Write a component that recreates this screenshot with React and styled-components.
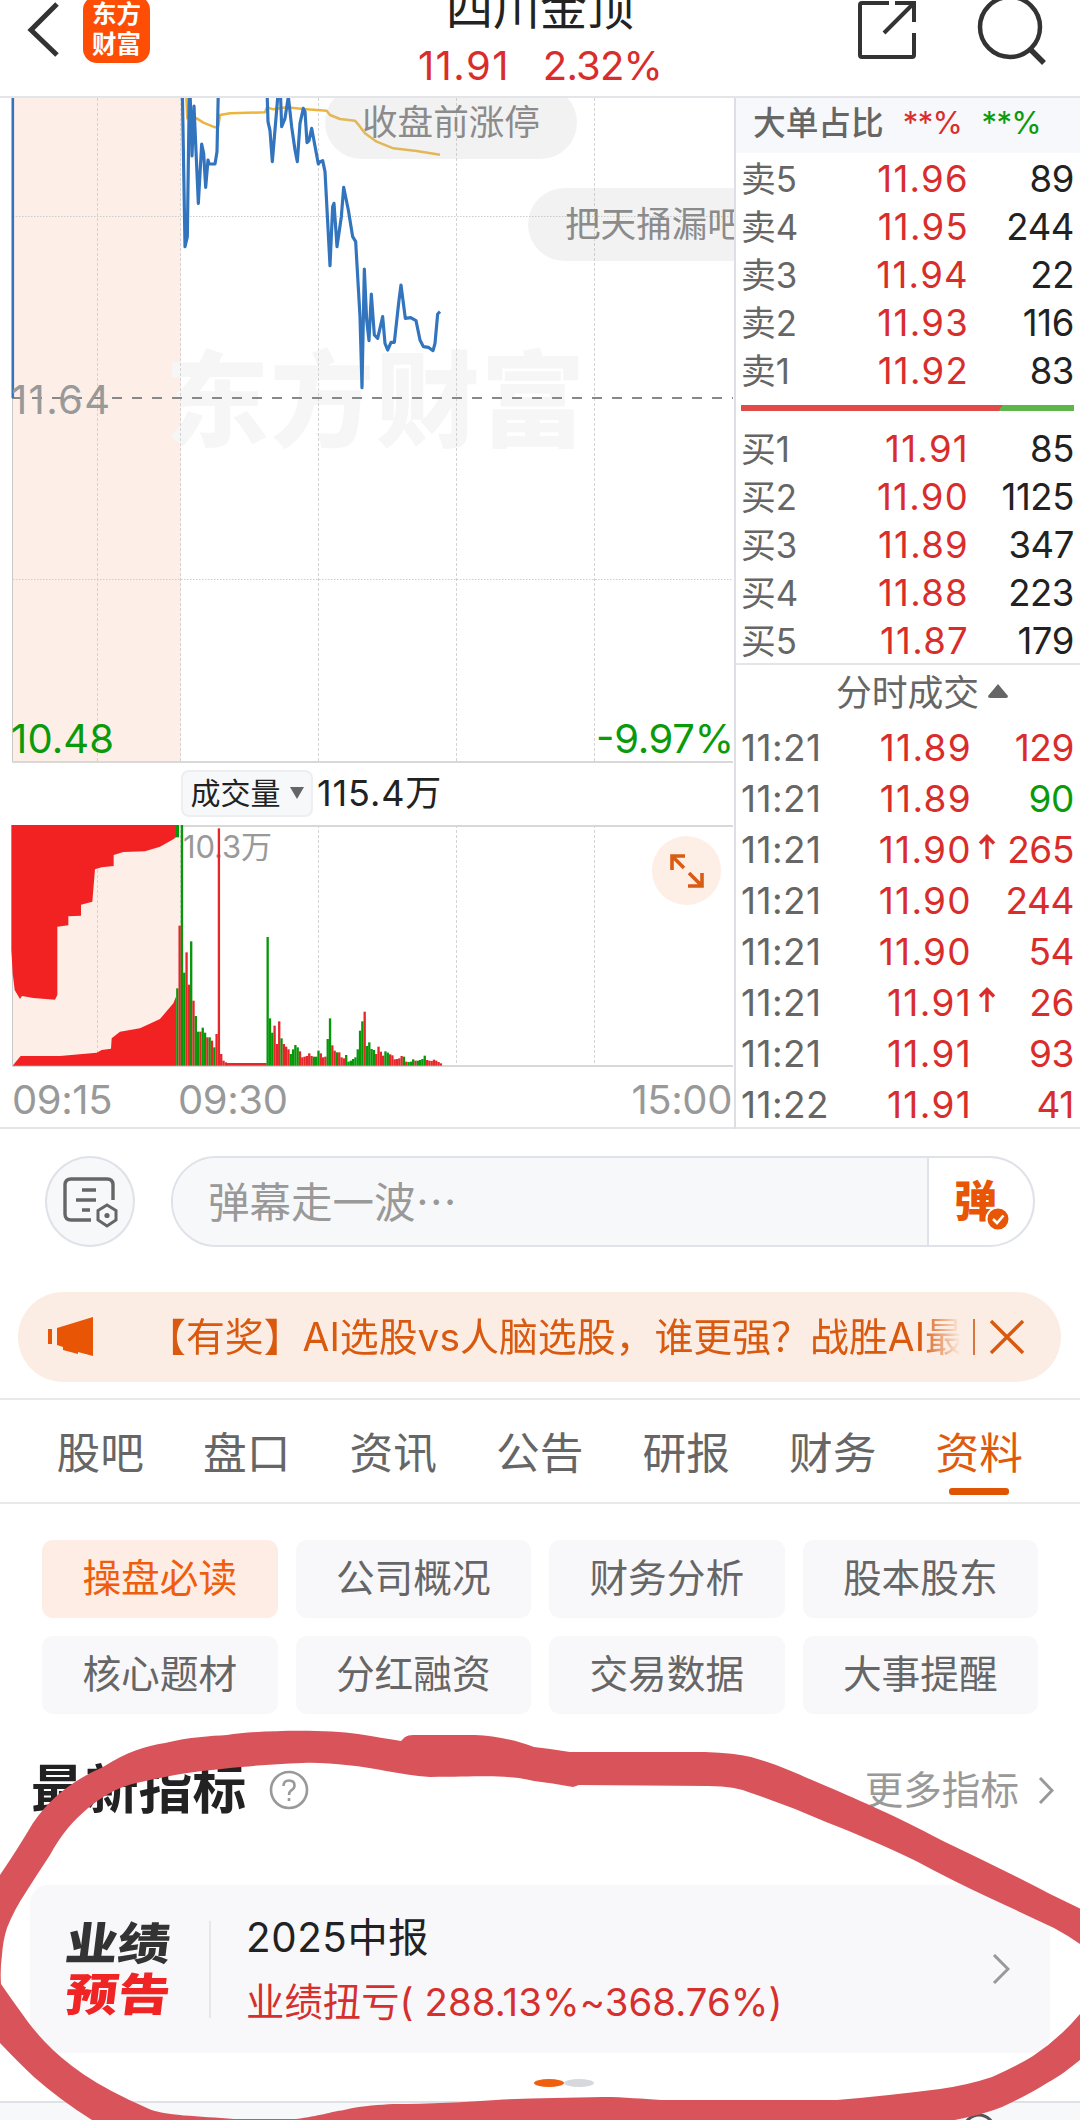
import React from "react";
import styled, { createGlobalStyle } from "styled-components";

const GlobalStyle = createGlobalStyle`
  * {
    box-sizing: border-box;
  }
  body {
    margin: 0;
    background: #fff;
    font-family: Inter, "Noto Sans CJK SC", sans-serif;
  }
`;

const Page = styled.main`
  position: relative;
  width: 1080px;
  height: 2120px;
  overflow: hidden;
  background: #fff;
  color: #222;
`;

const Header = styled.header`
  display: grid;
  grid-template-columns: 360px 1fr 360px;
  height: 98px;
  border-bottom: 2px solid #e4e5e8;
  overflow: hidden;
`;

const HeaderLeft = styled.div`
  display: flex;
  padding-left: 26px;
  gap: 22px;
`;

const HeaderRight = styled.div`
  display: flex;
  justify-content: flex-end;
  padding-right: 33px;
  gap: 59px;
`;

const Logo = styled.div`
  width: 67px;
  height: 67px;
  margin-top: -4px;
  padding-top: 4px;
  border-radius: 14px;
  background: #fe4d05;
  color: #fff;
  font-size: 24.5px;
  font-weight: 700;
  line-height: 29.5px;
  text-align: center;
`;

const HeaderTitle = styled.div`
  display: flex;
  flex-direction: column;
  align-items: center;
`;

const StockName = styled.h1`
  margin: -20px 0 0;
  font-size: 47px;
  font-weight: 400;
  line-height: 56px;
`;

const StockQuote = styled.div`
  display: flex;
  gap: 33px;
  margin-top: 8px;
  color: #d92d2c;
  font-size: 40px;
  line-height: 44px;
  letter-spacing: -0.8px;
  span:first-child {
    letter-spacing: 1.4px;
  }
`;

const Market = styled.section`
  display: grid;
  grid-template-columns: 734px 1fr;
  height: 1031px;
  border-bottom: 2px solid #e4e5e8;
`;

const Charts = styled.div`
  position: relative;
  overflow: hidden;
  svg {
    display: block;
  }
`;

const Bubble = styled.div`
  position: absolute;
  left: ${(props) => props.$left}px;
  top: ${(props) => props.$top}px;
  height: 73px;
  padding: 0 37px;
  border-radius: 37px;
  background: rgba(190, 190, 190, 0.2);
  color: #8b8b8b;
  font-size: 35.6px;
  line-height: 73px;
  white-space: nowrap;
`;

const VolumeBar = styled.div`
  display: flex;
  align-items: center;
  height: 62px;
  padding: 0 0 2px 181px;
  gap: 4px;
  font-size: 36px;
  line-height: 44px;
  letter-spacing: 0.9px;
`;

const VolumeSelect = styled.div`
  display: flex;
  align-items: center;
  justify-content: center;
  gap: 9px;
  width: 132px;
  height: 47px;
  border: 2px solid #eceef1;
  border-radius: 8px;
  background: #f7f8fa;
  font-size: 30px;
  letter-spacing: 0;
`;

const TimeAxis = styled.div`
  display: grid;
  grid-template-columns: 166px 1fr auto;
  padding: 7px 2px 0 12px;
  color: #999;
  font-size: 40px;
  line-height: 50px;
  letter-spacing: -0.4px;
`;

const Expand = styled.div`
  position: absolute;
  left: 652px;
  top: 738px;
  display: flex;
  align-items: center;
  justify-content: center;
  width: 69px;
  height: 69px;
  border-radius: 50%;
  background: #fdeee6;
`;

const Book = styled.aside`
  border-left: 2px solid #dddfe5;
`;

const BookHeader = styled.div`
  display: flex;
  align-items: center;
  height: 55px;
  margin-bottom: 2px;
  padding: 0 0 5px 17px;
  background: #f7f8fb;
  color: #666;
  font-size: 32.7px;
  font-weight: 500;
  line-height: 48px;
`;

const Ratio = styled.span`
  margin-left: 19px;
  color: ${(props) => props.$color};
  font-size: 31px;
  font-weight: 400;
  letter-spacing: -0.6px;
`;

const BookRow = styled.div`
  display: grid;
  grid-template-columns: 75px 153px 1fr;
  padding: 0 6px 0 5px;
  font-size: 36.5px;
  line-height: 48px;
`;

const BookLabel = styled.span`
  color: #666;
  font-size: 34.8px;
`;

const Price = styled.span`
  color: #d92d2c;
  letter-spacing: 1.3px;
  text-align: right;
`;

const Amount = styled.span`
  color: ${(props) => props.$color || "#222"};
  letter-spacing: -0.4px;
  text-align: right;
`;

const Balance = styled.div`
  height: 6px;
  margin: 10px 6px 14px 5px;
  background: linear-gradient(125deg, #e04b4a 77.6%, #5eb54a 77.7%);
`;

const DealTitle = styled.div`
  display: flex;
  align-items: center;
  justify-content: center;
  gap: 9px;
  height: 58px;
  margin-top: -2px;
  padding-left: 28px;
  border-top: 2px solid #e4e5e8;
  color: #666;
  font-size: 35.8px;
  line-height: 50px;
  svg {
    margin-bottom: 5px;
  }
`;

const DealRow = styled.div`
  display: grid;
  grid-template-columns: 110px 121px 26px 1fr;
  align-items: center;
  height: 51px;
  padding: 1px 6px 0 5px;
  font-size: 37px;
`;

const DealTime = styled.span`
  color: #666;
  letter-spacing: 0.4px;
`;

const Comment = styled.section`
  display: flex;
  gap: 36px;
  padding: 27px 45px 0;
`;

const RoundButton = styled.div`
  display: flex;
  align-items: center;
  justify-content: center;
  width: 90px;
  height: 91px;
  border: 2px solid #dfe2e8;
  border-radius: 50%;
  background: #f7f8fa;
`;

const CommentBox = styled.div`
  display: flex;
  width: 864px;
  height: 91px;
  border: 2px solid #dfe2e8;
  border-radius: 46px;
  overflow: hidden;
`;

const Placeholder = styled.div`
  flex: 1;
  padding-left: 35px;
  background: #f7f8fa;
  color: #999;
  font-family: "Noto Sans CJK SC", sans-serif;
  font-size: 41.5px;
  line-height: 85px;
`;

const Send = styled.div`
  position: relative;
  width: 106px;
  padding-left: 25px;
  border-left: 2px solid #dfe2e8;
  color: #e75505;
  font-size: 43px;
  font-weight: 800;
  line-height: 86px;
  svg {
    position: absolute;
    left: 56px;
    top: 48px;
  }
`;

const Banner = styled.section`
  display: flex;
  align-items: center;
  width: 1043px;
  height: 90px;
  margin: 45px 0 0 18px;
  padding-left: 30px;
  border-radius: 45px;
  background: #fcede4;
`;

const BannerText = styled.div`
  width: 814px;
  margin-left: 53px;
  overflow: hidden;
  color: #d9590f;
  font-size: 38.9px;
  line-height: 60px;
  white-space: nowrap;
  mask-image: linear-gradient(90deg, #000 95%, transparent);
`;

const BannerLine = styled.i`
  width: 2px;
  height: 36px;
  margin: 0 15px 0 12px;
  background: #d9763e;
`;

const Tabs = styled.nav`
  display: grid;
  grid-template-columns: repeat(7, 146.5px);
  height: 106px;
  margin-top: 16px;
  padding-left: 27px;
  border-top: 2px solid #e8e9eb;
  border-bottom: 2px solid #e8e9eb;
`;

const Tab = styled.div`
  display: flex;
  flex-direction: column;
  align-items: center;
  padding-top: 26px;
  color: ${(props) => (props.$active ? "#df5a0c" : "#666")};
  font-size: 43.7px;
  line-height: 56px;
  &::after {
    content: "";
    display: ${(props) => (props.$active ? "block" : "none")};
    width: 60px;
    height: 7px;
    margin-top: 6px;
    border-radius: 3px;
    background: #e05504;
  }
`;

const Chips = styled.section`
  display: grid;
  grid-template-columns: repeat(4, 1fr);
  gap: 18px;
  padding: 36px 42px 0;
`;

const Chip = styled.div`
  height: 78px;
  border-radius: 11px;
  background: ${(props) => (props.$active ? "#feede4" : "#f8f8fa")};
  color: ${(props) => (props.$active ? "#ee5e0e" : "#666")};
  font-size: 38.7px;
  line-height: 77px;
  text-align: center;
`;

const SectionHead = styled.div`
  display: flex;
  align-items: center;
  height: 60px;
  margin-top: 46px;
  padding: 0 26px 0 31px;
`;

const SectionTitle = styled.h2`
  flex: 1;
  display: flex;
  align-items: center;
  gap: 23px;
  margin: 0;
  font-size: 53.8px;
  font-weight: 700;
  line-height: 58px;
`;

const More = styled.div`
  display: flex;
  align-items: center;
  gap: 19px;
  color: #999;
  font-size: 38.6px;
  line-height: 56px;
`;

const Card = styled.article`
  display: flex;
  align-items: center;
  width: 1020px;
  height: 168px;
  margin: 65px 0 0 30px;
  padding: 0 40px 0 36px;
  border-radius: 18px;
  background: #f8f8fa;
`;

const Badge = styled.div`
  width: 105px;
`;

const BadgeLine = styled.div`
  width: 90px;
  color: ${(props) => props.$color};
  font-size: 45px;
  font-weight: 900;
  line-height: 51px;
  transform: scaleX(1.16) skewX(-6deg);
  transform-origin: 0 50%;
`;

const Report = styled.div`
  flex: 1;
  height: 97px;
  margin-left: 38px;
  padding-left: 35px;
  border-left: 2px solid #e6e7ea;
`;

const ReportTitle = styled.div`
  margin-top: -11px;
  font-size: 40.3px;
  line-height: 56px;
  letter-spacing: 0.6px;
`;

const ReportText = styled.div`
  margin-top: 8px;
  color: #d5302e;
  font-size: 38.3px;
  line-height: 56px;
  letter-spacing: 0.1px;
  white-space: nowrap;
`;

const Pager = styled.div`
  display: flex;
  justify-content: center;
  margin: 26px 0 0 48px;
`;

const Dot = styled.i`
  width: 30px;
  height: 8px;
  border-radius: 50%;
  background: ${(props) => (props.$active ? "#ee6010" : "#d6d8dd")};
`;

const NextBlock = styled.div`
  display: flex;
  height: 20px;
  margin-top: 14px;
  padding: 10px 0 0 962px;
  border-top: 2px solid #dfe1e6;
  background: #f7f8fa;
  overflow: hidden;
`;

const Scribble = styled.svg`
  position: absolute;
  left: 0;
  top: 1700px;
  pointer-events: none;
`;

const RED = "#d92d2c";
const GREEN = "#0a9a0a";

const asks = [
  ["卖5", "11.96", 89],
  ["卖4", "11.95", 244],
  ["卖3", "11.94", 22],
  ["卖2", "11.93", 116],
  ["卖1", "11.92", 83],
];

const bids = [
  ["买1", "11.91", 85],
  ["买2", "11.90", 1125],
  ["买3", "11.89", 347],
  ["买4", "11.88", 223],
  ["买5", "11.87", 179],
];

const deals = [
  ["11:21", "11.89", "", 129, RED],
  ["11:21", "11.89", "", 90, GREEN],
  ["11:21", "11.90", "up", 265, RED],
  ["11:21", "11.90", "", 244, RED],
  ["11:21", "11.90", "", 54, RED],
  ["11:21", "11.91", "up", 26, RED],
  ["11:21", "11.91", "", 93, RED],
  ["11:22", "11.91", "", 41, RED],
];

const tabs = ["股吧", "盘口", "资讯", "公告", "研报", "财务", "资料"];

const chips = [
  "操盘必读",
  "公司概况",
  "财务分析",
  "股本股东",
  "核心题材",
  "分红融资",
  "交易数据",
  "大事提醒",
];

const priceLines = [
  "37,0 45,470 52,440 58,0",
  "60,0 66,198 72,48 85,340 95,162 101,190 107,292 114,210 117,222 135,222 141,185 145,0",
  "291,0 294,95 300,122 307,215 325,0",
  "331,0 335,110 345,85 355,20 365,110 375,180 382,215 390,100 400,55 405,65 411,158 417,152 425,115 445,222 450,215 458,212 465,245 480,527 488,350 492,340 501,470 514,380 521,292 535,360 548,440 557,455 570,680 576,893 583,537 590,690 597,752 604,612 613,735 623,745 638,680 645,760 653,780 663,757 673,757 687,630 693,585 706,685 722,683 738,692 750,750 760,770 775,772 789,782 795,760 803,672 810,665",
];

const averageLine =
  "48,0 52,85 80,85 100,98 135,112 145,108 150,75 180,70 285,67 291,52 310,58 350,52 400,57 470,62 480,75 510,87 555,92 570,110 585,130 620,155 670,175 740,183 810,194";

// one entry per minute: colour and top of the bar
const openBars =
  "g535 r347 g44 g488 r427 r524 g394 r572 g618 g665 r665 g653 g668 r682 g682 r692 g712 r672 r55 r732 r752 r757";
const laterBars =
  "g381 g625 g668 r647 r702 r634 g685 r702 r710 r718 g732 g718 g705 g712 r724 r742 r740 r738 r730 r738 g740 g740 g722 r730 r742 r740 g687 g625 r706 r722 g727 r727 r742 r745 g735 g755 g752 g747 g742 g718 g662 g634 r605 g708 g697 g717 g720 r732 r710 r725 r737 g724 g728 r733 r736 r748 r747 r745 r738 g740 r755 g756 g755 g748 r752 g752 g750 g747 g737 r750 r752 r753 r749 r752 r756 r760";

const Bars = ({ data, start }) =>
  data.split(" ").map((item, i) => {
    const top = Number(item.slice(1));
    return (
      <rect
        key={i}
        x={start + i * 6.93}
        y={top}
        width="7"
        height={767 - top}
        fill={item[0] === "g" ? "#07980a" : "#e4282a"}
      />
    );
  });

const gridX = [97.5, 180.5, 318.5, 456.5, 594.5];

const PriceChart = () => (
  <svg width="733" height="665" viewBox="0 98 733 665">
    <rect x="13" y="98" width="168" height="664" fill="#fdeee7" />
    <text x="165" y="439" fontSize="104" fontWeight="800" fill="#f6f6f6" textLength="420">
      东方财富
    </text>
    {gridX.map((x) => (
      <path key={x} d={`M${x} 98V762`} stroke="#d3d3d3" strokeDasharray="3 2" />
    ))}
    <path d="M13 216.5H733M13 579.5H733" stroke="#ccc" strokeDasharray="1.5 1.5" />
    <path d="M12.5 98V762" stroke="#c9c9c9" />
    <path d="M12 762H733" stroke="#d8d8d8" strokeWidth="2" />
    <path d="M12 398H733" stroke="#888" strokeWidth="2" strokeDasharray="10 10" />
    <g transform="translate(170 90) scale(.33333)" fill="none" strokeLinejoin="round">
      <polyline points={averageLine} stroke="#ecb63e" strokeWidth="7.5" />
      {priceLines.map((points) => (
        <polyline key={points} points={points} stroke="#3274bd" strokeWidth="9.5" />
      ))}
    </g>
    <path d="M12.8 98V398" stroke="#3274bd" strokeWidth="2.6" />
    <text x="11" y="414" fontSize="40" fill="#999" textLength="99">
      11.64
    </text>
    <text x="11" y="753" fontSize="40" fill={GREEN} textLength="103">
      10.48
    </text>
    <text x="596" y="753" fontSize="40" fill={GREEN} textLength="138">
      -9.97%
    </text>
  </svg>
);

const VolumeChart = () => (
  <svg width="733" height="243" viewBox="0 825 733 243">
    <rect x="13" y="825" width="168" height="241" fill="#fdeee7" />
    {gridX.map((x) => (
      <path key={x} d={`M${x} 825V1066`} stroke="#d3d3d3" strokeDasharray="3 2" />
    ))}
    <path d="M12.5 825V1066" stroke="#c9c9c9" />
    <path d="M12 826H733M12 1066H733" stroke="#d8d8d8" strokeWidth="2" />
    <text x="183" y="858" fontSize="31" fill="#999" textLength="89">
      10.3万
    </text>
    <g transform="translate(0 810) scale(.33333)">
      <path
        fill="#f22222"
        d="M34 44V420L38 490L44 540L60 567L66 558L100 564L165 569L172 555V350L205 346V319L243 317V284L277 275L285 178L305 172L341 168V135L370 126L435 124L480 110L520 88L528 82V44Z"
      />
      <path
        fill="#f22222"
        d="M38 767L50 752L62 738H180L290 728L305 720L333 716L335 685L360 665L420 655L480 627L520 580L528 560V767Z"
      />
      <rect x="528" y="44" width="9" height="38" fill="#07980a" />
      <rect x="680" y="759" width="120" height="8" fill="#e4282a" />
      <Bars data={openBars} start={528.5} />
      <Bars data={laterBars} start={799.5} />
    </g>
  </svg>
);

const Triangle = ({ size, up, flat }) => (
  <svg width={size} height={flat} viewBox="0 0 20 14" preserveAspectRatio="none">
    <path d={up ? "M10 0L20 12Q20 14 18 14H2Q0 14 0 12Z" : "M0 0H20L10 14Z"} fill="#666" />
  </svg>
);

const Chevron = ({ w, h }) => (
  <svg width={w} height={h} viewBox={`0 0 ${w} ${h}`} fill="none" stroke="#999" strokeWidth="3">
    <path d={`M2 1L${w - 2} ${h / 2}L2 ${h - 1}`} />
  </svg>
);

const BookRows = ({ rows }) =>
  rows.map(([label, price, amount]) => (
    <BookRow key={label}>
      <BookLabel>{label}</BookLabel>
      <Price>{price}</Price>
      <Amount>{amount}</Amount>
    </BookRow>
  ));

const outline =
  "M-20 1900L0 1875C12 1857 23 1840 33 1823C52 1795 76 1779 103 1767C127 1752 145 1746 165 1743C190 1737 210 1736 227 1735C260 1730 325 1729 358 1734C376 1737 390 1739 401 1741L405 1737Q408 1735 413 1735H475C495 1736 516 1740 534 1747Q552 1749 570 1752H705Q735 1753 751 1757C780 1765 802 1776 826 1786C865 1803 890 1813 943 1841Q1000 1868 1050 1894L1100 1918V2050L1080 2060C1071 2067 1059 2077 1047 2083Q1030 2094 1002 2107Q985 2114 955 2120H92Q60 2100 34 2077Q18 2062 0 2043L-20 2010Z";
const hole =
  "M1100 1956L1080 1944Q1067 1935 1054 1928Q1020 1912 992 1899Q955 1882 916 1861C885 1846 857 1834 826 1822Q790 1806 751 1793Q735 1786 709 1786L579 1785L573 1787Q552 1783 534 1781C505 1774 480 1777 430 1777C414 1776 400 1773 386 1771C360 1766 327 1762 303 1763C280 1764 260 1765 241 1767C210 1770 188 1772 165 1777C140 1782 123 1785 110 1793C95 1801 80 1814 68 1828Q58 1840 50 1855Q38 1873 26 1892Q14 1910 7 1928Q3 1940 2 1955Q0 1970 1 1984Q12 2000 23 2015Q31 2027 45 2042Q60 2058 83 2074Q108 2091 147 2108C163 2116 200 2116 234 2119H296C320 2116 330 2112 344 2110C365 2105 380 2105 393 2104C430 2104 465 2102 496 2100C530 2098 565 2098 603 2097C625 2097 642 2099 661 2100L837 2100Q885 2096 940 2089Q968 2085 992 2077Q1017 2066 1033 2056Q1060 2038 1080 2014L1100 1990Z";

export default function App() {
  return (
    <Page>
      <GlobalStyle />
      <Header>
        <HeaderLeft>
          <svg width="35" height="60" fill="none" stroke="#333" strokeWidth="5">
            <path d="M31 4L5 30L31 55" />
          </svg>
          <Logo>
            东方
            <br />
            财富
          </Logo>
        </HeaderLeft>
        <HeaderTitle>
          <StockName>四川金顶</StockName>
          <StockQuote>
            <span>11.91</span>
            <span>2.32%</span>
          </StockQuote>
        </HeaderTitle>
        <HeaderRight>
          <svg width="60" height="62" fill="none" stroke="#333" strokeWidth="4">
            <path d="M32 3H5Q3 3 3 5V55Q3 57 5 57H55Q57 57 57 55V33" />
            <path d="M38 3H57V22M56 4L27 33" />
          </svg>
          <svg width="71" height="66" fill="none" stroke="#333" strokeWidth="4.5">
            <circle cx="34" cy="27" r="30" />
            <path d="M54 49L68 63" strokeWidth="5.5" />
          </svg>
        </HeaderRight>
      </Header>

      <Market>
        <Charts>
          <PriceChart />
          <VolumeBar>
            <VolumeSelect>
              成交量
              <Triangle size={14} flat={12} />
            </VolumeSelect>
            115.4万
          </VolumeBar>
          <VolumeChart />
          <TimeAxis>
            <span>09:15</span>
            <span>09:30</span>
            <span>15:00</span>
          </TimeAxis>
          <Bubble $left={325} $top={-12}>
            收盘前涨停
          </Bubble>
          <Bubble $left={528} $top={90}>
            把天捅漏吧
          </Bubble>
          <Expand>
            <svg width="34" height="34" fill="none" stroke="#d95c14" strokeWidth="3.6">
              <path d="M2 16V2H15M2 2L14 14M32 19V32H18M32 32L19 19" />
            </svg>
          </Expand>
        </Charts>
        <Book>
          <BookHeader>
            大单占比
            <Ratio $color={RED}>**%</Ratio>
            <Ratio $color={GREEN}>**%</Ratio>
          </BookHeader>
          <BookRows rows={asks} />
          <Balance />
          <BookRows rows={bids} />
          <DealTitle>
            分时成交
            <Triangle size={20} flat={14} up />
          </DealTitle>
          {deals.map(([time, price, dir, amount, color], i) => (
            <DealRow key={i}>
              <DealTime>{time}</DealTime>
              <Price>{price}</Price>
              <svg width="26" height="36" fill="none" stroke={RED} strokeWidth="3.4">
                {dir && <path d="M15 28V5M8 12.500L15 5.500L22 12.500" />}
              </svg>
              <Amount $color={color}>{amount}</Amount>
            </DealRow>
          ))}
        </Book>
      </Market>

      <Comment>
        <RoundButton>
          <svg width="56" height="52" fill="none" stroke="#666" strokeWidth="3.4">
            <path d="M29 44H9Q3 44 3 38V9Q3 3 9 3H45Q51 3 51 9V24" />
            <path d="M20 14H34M14 24H34M20 34H28" strokeWidth="3.6" />
            <path d="M45 29L54 34.500V44L45 50L36 44V34.500Z" strokeWidth="3" />
            <circle cx="45" cy="39.500" r="2.600" fill="#666" stroke="none" />
          </svg>
        </RoundButton>
        <CommentBox>
          <Placeholder>弹幕走一波…</Placeholder>
          <Send>
            弹
            <svg width="26" height="26">
              <circle cx="13" cy="13" r="11.5" fill="#e75505" stroke="#fff" strokeWidth="2" />
              <path d="M8 13L12 17L18.500 9.500" fill="none" stroke="#fff" strokeWidth="2.6" />
            </svg>
          </Send>
        </CommentBox>
      </Comment>

      <Banner>
        <svg width="46" height="40" fill="#e75505">
          <path d="M0 12H4V27H0ZM9 11L45 0V39L30 35V37L15 33V30L9 28Z" />
        </svg>
        <BannerText>【有奖】AI选股vs人脑选股，谁更强？战胜AI最</BannerText>
        <BannerLine />
        <svg width="34" height="34" fill="none" stroke="#d9590f" strokeWidth="3.4">
          <path d="M1 1L33 33M33 1L1 33" />
        </svg>
      </Banner>

      <Tabs>
        {tabs.map((tab) => (
          <Tab key={tab} $active={tab === "资料"}>
            {tab}
          </Tab>
        ))}
      </Tabs>

      <Chips>
        {chips.map((chip, i) => (
          <Chip key={chip} $active={i === 0}>
            {chip}
          </Chip>
        ))}
      </Chips>

      <SectionHead>
        <SectionTitle>
          最新指标
          <svg width="40" height="40" fill="none" stroke="#999" strokeWidth="2.6">
            <circle cx="20" cy="20" r="18" />
            <path d="M14.500 16Q14.500 10.500 20 10.500Q25.500 10.500 25.500 15.500Q25.500 18.500 22 20.500Q20 22 20 25M20 28V31" />
          </svg>
        </SectionTitle>
        <More>
          更多指标
          <Chevron w={16} h={27} />
        </More>
      </SectionHead>

      <Card>
        <Badge>
          <BadgeLine $color="#333">业绩</BadgeLine>
          <BadgeLine $color="#f02424">预告</BadgeLine>
        </Badge>
        <Report>
          <ReportTitle>2025中报</ReportTitle>
          <ReportText>业绩扭亏( 288.13%~368.76%)</ReportText>
        </Report>
        <Chevron w={18} h={30} />
      </Card>

      <Pager>
        <Dot $active />
        <Dot />
      </Pager>

      <NextBlock>
        <svg width="34" height="34" fill="none" stroke="#555" strokeWidth="3">
          <circle cx="17" cy="17" r="15" />
        </svg>
      </NextBlock>

      <Scribble width="1080" height="420" viewBox="0 1700 1080 420">
        <path d={outline + hole} fill="#d9545a" fillRule="evenodd" />
      </Scribble>
    </Page>
  );
}
